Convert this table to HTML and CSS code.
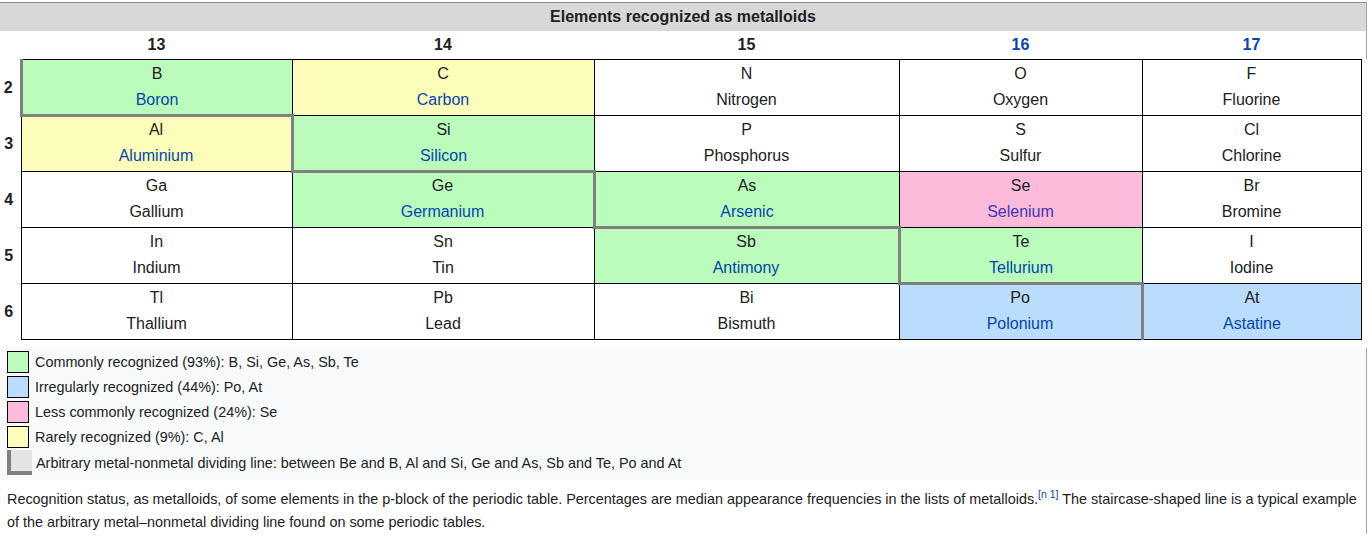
FILE: index.html
```html
<!DOCTYPE html>
<html lang="en">
<head>
<meta charset="utf-8">
<title>Elements recognized as metalloids</title>
<link rel="stylesheet" href="styles.css">
</head>
<body>
<div class="figure">
  <div class="title">Elements recognized as metalloids</div>
  <div class="groups">
    <span></span>
    <span>13</span>
    <span>14</span>
    <span>15</span>
    <span class="link">16</span>
    <span class="link">17</span>
  </div>
  <table class="grid">
    <colgroup>
      <col class="c-lab"><col class="c13"><col class="c14"><col class="c15"><col class="c16"><col class="c17">
    </colgroup>
    <tr>
      <th class="rl">2</th>
      <td class="common st-l st-b"><span class="sym">B</span><span class="nm link">Boron</span></td>
      <td class="rare"><span class="sym">C</span><span class="nm link">Carbon</span></td>
      <td><span class="sym">N</span><span class="nm">Nitrogen</span></td>
      <td><span class="sym">O</span><span class="nm">Oxygen</span></td>
      <td><span class="sym">F</span><span class="nm">Fluorine</span></td>
    </tr>
    <tr>
      <th class="rl">3</th>
      <td class="rare"><span class="sym">Al</span><span class="nm link">Aluminium</span></td>
      <td class="common st-l st-b"><span class="sym">Si</span><span class="nm link">Silicon</span></td>
      <td><span class="sym">P</span><span class="nm">Phosphorus</span></td>
      <td><span class="sym">S</span><span class="nm">Sulfur</span></td>
      <td><span class="sym">Cl</span><span class="nm">Chlorine</span></td>
    </tr>
    <tr>
      <th class="rl">4</th>
      <td><span class="sym">Ga</span><span class="nm">Gallium</span></td>
      <td class="common"><span class="sym">Ge</span><span class="nm link">Germanium</span></td>
      <td class="common st-l st-b"><span class="sym">As</span><span class="nm link">Arsenic</span></td>
      <td class="less"><span class="sym">Se</span><span class="nm visited">Selenium</span></td>
      <td><span class="sym">Br</span><span class="nm">Bromine</span></td>
    </tr>
    <tr>
      <th class="rl">5</th>
      <td><span class="sym">In</span><span class="nm">Indium</span></td>
      <td><span class="sym">Sn</span><span class="nm">Tin</span></td>
      <td class="common"><span class="sym">Sb</span><span class="nm link">Antimony</span></td>
      <td class="common st-l st-b"><span class="sym">Te</span><span class="nm link">Tellurium</span></td>
      <td><span class="sym">I</span><span class="nm">Iodine</span></td>
    </tr>
    <tr>
      <th class="rl">6</th>
      <td><span class="sym">Tl</span><span class="nm">Thallium</span></td>
      <td><span class="sym">Pb</span><span class="nm">Lead</span></td>
      <td><span class="sym">Bi</span><span class="nm">Bismuth</span></td>
      <td class="irreg"><span class="sym">Po</span><span class="nm link">Polonium</span></td>
      <td class="irreg st-l"><span class="sym">At</span><span class="nm link">Astatine</span></td>
    </tr>
  </table>
  <div class="legend">
    <div class="li"><span class="sw common"></span>Commonly recognized (93%): B, Si, Ge, As, Sb, Te</div>
    <div class="li"><span class="sw irreg"></span>Irregularly recognized (44%): Po, At</div>
    <div class="li"><span class="sw less"></span>Less commonly recognized (24%): Se</div>
    <div class="li"><span class="sw rare"></span>Rarely recognized (9%): C, Al</div>
    <div class="li li-line"><span class="sw-line"></span>Arbitrary metal-nonmetal dividing line: between Be and B, Al and Si, Ge and As, Sb and Te, Po and At</div>
  </div>
  <p class="caption">Recognition status, as metalloids, of some elements in the p-block of the periodic table. Percentages are median appearance frequencies in the lists of metalloids.<sup class="ref">[n 1]</sup> The staircase-shaped line is a typical example of the arbitrary metal–nonmetal dividing line found on some periodic tables.</p>
</div>
</body>
</html>
```
FILE: styles.css
```css
html, body {
  margin: 0;
  padding: 0;
  background: #ffffff;
}

body {
  font-family: "Liberation Sans", Arial, sans-serif;
  color: #202122;
}

.figure {
  width: 1367px;
  margin-top: 2px;
}

.title {
  box-sizing: border-box;
  width: 1367px;
  height: 29px;
  border-top: 1px solid #8c8c8c;
  border-right: 1px solid #a2a2a2;
  background: #d8d8d8;
  font-weight: bold;
  font-size: 16px;
  line-height: 28px;
  text-align: center;
}

.groups {
  box-sizing: border-box;
  width: 1367px;
  height: 28px;
  border-right: 1px solid #a2a2a2;
  display: grid;
  grid-template-columns: 21px 271px 302px 305px 243px 219px;
  font-weight: bold;
  font-size: 16px;
  line-height: 28px;
  text-align: center;
}

.link {
  color: #0645ad;
}

.visited {
  color: #3b38b4;
}

.grid {
  border-collapse: collapse;
  table-layout: fixed;
  width: 1361px;
  font-size: 16px;
}

.grid tr {
  height: 56px;
}

.c-lab { width: 21px; }
.c13 { width: 271px; }
.c14 { width: 302px; }
.c15 { width: 305px; }
.c16 { width: 243px; }
.c17 { width: 219px; }

.grid th.rl {
  font-weight: bold;
  text-align: center;
  padding: 0 3px 0 0;
  border: none;
}

.grid td {
  border: 1px solid #000000;
  text-align: center;
  vertical-align: middle;
  padding: 0;
  line-height: 26px;
}

.sym, .nm {
  display: block;
}

.sym {
  margin-top: -2px;
}

.grid td.st-l {
  border-left: 3px solid #808080;
}

.grid td.st-b {
  border-bottom: 3px solid #808080;
  padding-top: 2px;
}

.common { background: #bbfbbb; }
.rare { background: #fdfdbb; }
.less { background: #fdbbdb; }
.irreg { background: #bbddfd; }

.legend {
  box-sizing: border-box;
  width: 1367px;
  margin-top: 8px;
  padding: 1px 0 4px 7px;
  background: #f8f9fa;
  border-right: 1px solid #a2a2a2;
  font-size: 14.4px;
}

.li {
  display: flex;
  align-items: center;
  height: 25px;
}

.sw {
  box-sizing: border-box;
  width: 22px;
  height: 22px;
  border: 1px solid #000000;
  margin-right: 6px;
  flex: none;
}

.li-line {
  height: 27px;
}

.sw-line {
  box-sizing: border-box;
  width: 25px;
  height: 25px;
  border-left: 4px solid #808080;
  border-bottom: 4px solid #808080;
  background: #e4e4e4;
  margin-right: 4px;
  flex: none;
}

.caption {
  box-sizing: border-box;
  width: 1367px;
  margin: 0;
  padding: 8px 6px 0 7px;
  border-right: 1px solid #a2a2a2;
  font-size: 14.4px;
  line-height: 23px;
}

.ref {
  color: #0645ad;
  font-size: 10.5px;
  line-height: 0;
  vertical-align: super;
}
```
